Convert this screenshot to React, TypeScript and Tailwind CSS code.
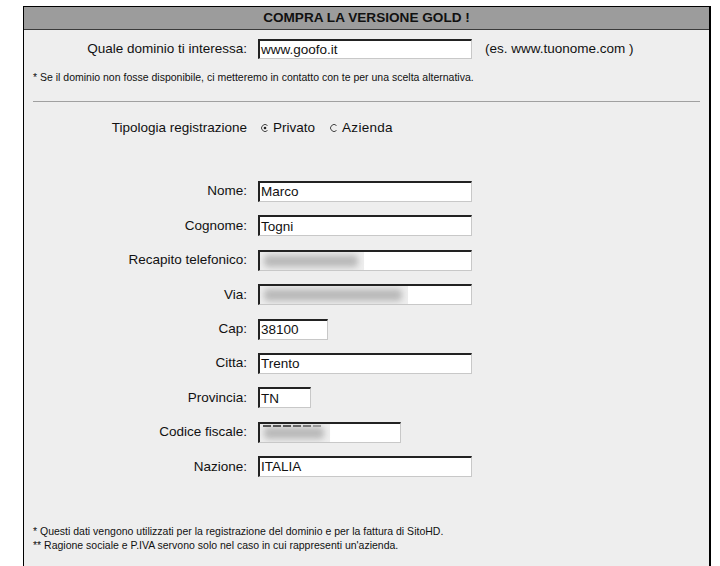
import React from "react";

const font = { fontFamily: '"Liberation Sans", Arial, sans-serif' };

function Radio({ checked }: { checked?: boolean }) {
  return (
    <svg width="8" height="8" viewBox="0 0 8 8" className="shrink-0">
      <path d="M6.5 1.5 A3.5 3.5 0 1 0 6.5 6.5" fill="none" stroke="#444" strokeWidth="1" />
      {checked && <circle cx="4" cy="4" r="1.3" fill="#222" />}
    </svg>
  );
}

function Field({
  label,
  value,
  width,
  blur,
  dashes,
}: {
  label: string;
  value?: string;
  width: string;
  blur?: string;
  dashes?: boolean;
}) {
  return (
    <div className="flex items-center h-[21px]">
      <div className="w-[223px] text-right pr-0 text-[13.5px] text-[#111]">{label}</div>
      <div
        className={`ml-[11px] h-[21px] ${width} bg-white border-t-2 border-l-2 border-t-[#222] border-l-[#222] border-b border-r border-b-[#c8c8c8] border-r-[#c8c8c8] relative overflow-hidden flex items-center pl-[1px] text-[13.5px] text-[#111] leading-none`}
      >
        {value}
        {blur && (
          <div className={`absolute -top-[2px] left-0 bottom-0 ${blur} bg-[#eeeeee]`}>
            <div className="absolute left-[4px] right-[6px] top-[5px] bottom-[3px] bg-[#b9b9b9] blur-[3px] rounded" />
            {dashes && (
              <div className="absolute left-[3px] top-[3px] w-[58px] h-[2px] flex gap-[2px]">
                <div className="flex-1 bg-[#555]" />
                <div className="flex-1 bg-[#555]" />
                <div className="flex-1 bg-[#555]" />
                <div className="flex-1 bg-[#666]" />
                <div className="flex-1 bg-[#777]" />
                <div className="flex-1 bg-[#999]" />
              </div>
            )}
          </div>
        )}
      </div>
    </div>
  );
}

export default function App() {
  return (
    <div className="w-[720px] h-[566px] bg-white overflow-hidden" style={font}>
      <div className="ml-[23px] mt-[6px] w-[688px] border border-black border-r-2">
        <div className="h-[23px] bg-[#9c9c9c] border-b border-[#3a3a3a] flex items-center justify-center font-bold text-[13.6px] text-[#111]">
          COMPRA LA VERSIONE GOLD !
        </div>
        <div className="bg-[#eeeeee] pt-[9px] pb-[40px]">
          <div className="flex items-center h-[20px]">
            <div className="w-[223px] text-right text-[13.5px] text-[#111]">Quale dominio ti interessa:</div>
            <div className="ml-[11px] h-[20px] w-[214px] bg-white border-t-2 border-l-2 border-t-[#222] border-l-[#222] border-b border-r border-b-[#c8c8c8] border-r-[#c8c8c8] flex items-center pl-[1px] text-[13.5px] text-[#111] leading-none">
              www.goofo.it
            </div>
            <div className="ml-[13px] text-[13.5px] text-[#111]">(es. www.tuonome.com )</div>
          </div>
          <div className="mt-[12px] ml-[9px] text-[10.5px] text-[#111] leading-[12px]">
            * Se il dominio non fosse disponibile, ci metteremo in contatto con te per una scelta alternativa.
          </div>
          <div className="mt-[18px] ml-[9px] mr-[9px] h-px bg-[#a0a0a0]" />
          <div className="flex items-center h-[20px] mt-[16px]">
            <div className="w-[223px] text-right text-[13.5px] text-[#111]">Tipologia registrazione</div>
            <div className="ml-[14px] flex items-center gap-[4px] text-[13.5px] text-[#111]">
              <Radio checked />
              <span>Privato</span>
            </div>
            <div className="ml-[15px] flex items-center gap-[4px] text-[13.5px] text-[#111] tracking-[0.3px]">
              <Radio />
              <span>Azienda</span>
            </div>
          </div>
          <div className="mt-[43px] flex flex-col gap-[13.4px]">
            <Field label="Nome:" value="Marco" width="w-[214px]" />
            <Field label="Cognome:" value="Togni" width="w-[214px]" />
            <Field label="Recapito telefonico:" width="w-[214px]" blur="w-[104px]" />
            <Field label="Via:" width="w-[214px]" blur="w-[148px]" />
            <Field label="Cap:" value="38100" width="w-[70px]" />
            <Field label="Citta:" value="Trento" width="w-[214px]" />
            <Field label="Provincia:" value="TN" width="w-[53px]" />
            <Field label="Codice fiscale:" width="w-[143px]" blur="w-[70px]" dashes />
            <Field label="Nazione:" value="ITALIA" width="w-[214px]" />
          </div>
          <div className="mt-[47px] ml-[9px] text-[10.5px] text-[#111] leading-[14px]">
            <div>* Questi dati vengono utilizzati per la registrazione del dominio e per la fattura di SitoHD.</div>
            <div>** Ragione sociale e P.IVA servono solo nel caso in cui rappresenti un'azienda.</div>
          </div>
        </div>
      </div>
    </div>
  );
}
